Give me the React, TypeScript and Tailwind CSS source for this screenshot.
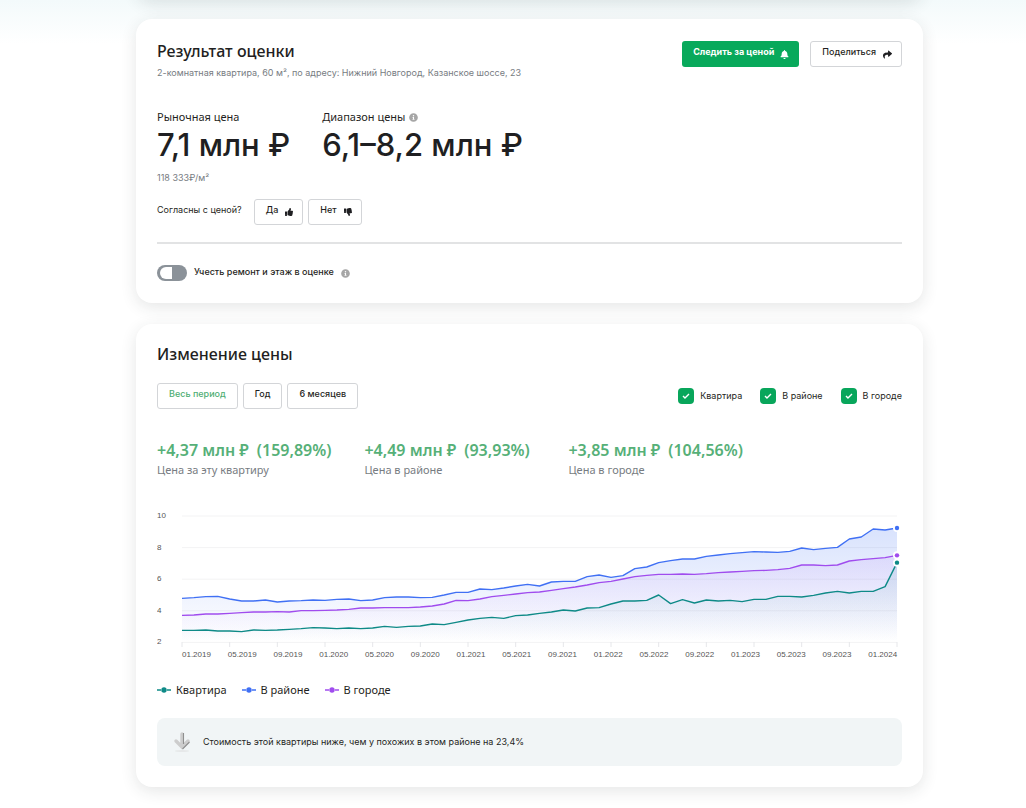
import type { ReactNode } from 'react';
import { FaBell, FaInfoCircle, FaShare, FaThumbsDown, FaThumbsUp } from 'react-icons/fa';

const series = [
  {
    id: 'district',
    color: '#4070f4',
    opacity: 0.2,
    points: [
      295, 293, 290, 289, 297, 303, 303, 300, 306, 303, 302, 300, 301, 298, 297, 302, 300, 293, 291, 291, 293, 292, 285,
      277, 277, 267, 269, 264, 258, 253, 258, 246, 244, 244, 230, 225, 232, 227, 206, 201, 188, 182, 177, 177, 169, 165,
      161, 158, 155, 156, 157, 154, 144, 149, 145, 142, 117, 111, 87, 90, 84,
    ],
  },
  {
    id: 'city',
    color: '#a04cee',
    opacity: 0.1,
    points: [
      346, 345, 342, 342, 340, 338, 336, 336, 335, 336, 332, 332, 331, 330, 328, 324, 324, 323, 323, 323, 321, 318, 312,
      301, 302, 297, 290, 286, 282, 278, 276, 271, 266, 261, 255, 248, 244, 237, 230, 226, 223, 223, 222, 223, 221, 218,
      216, 214, 212, 211, 209, 205, 195, 195, 197, 195, 183, 179, 176, 173, 166,
    ],
  },
  {
    id: 'flat',
    color: '#0e8a87',
    opacity: 0.1,
    points: [
      391, 391, 390, 393, 393, 395, 390, 391, 390, 388, 386, 383, 384, 386, 384, 386, 384, 379, 382, 379, 378, 372, 374,
      367, 360, 355, 352, 355, 347, 345, 340, 336, 330, 333, 324, 323, 312, 303, 303, 301, 285, 311, 299, 309, 300, 303,
      301, 305, 298, 298, 289, 289, 291, 286, 279, 274, 279, 274, 274, 260, 188,
    ],
  },
];

const months = [
  '01.2019', '05.2019', '09.2019', '01.2020', '05.2020', '09.2020', '01.2021', '05.2021',
  '09.2021', '01.2022', '05.2022', '09.2022', '01.2023', '05.2023', '09.2023', '01.2024',
];

const levels = [10, 8, 6, 4, 2];

const stats = [
  { value: '+4,37 млн ₽', percent: '(159,89%)', label: 'Цена за эту квартиру' },
  { value: '+4,49 млн ₽', percent: '(93,93%)', label: 'Цена в районе' },
  { value: '+3,85 млн ₽', percent: '(104,56%)', label: 'Цена в городе' },
];

const legend = [
  { name: 'Квартира', color: '#0e8a87' },
  { name: 'В районе', color: '#4070f4' },
  { name: 'В городе', color: '#a04cee' },
];

const LEFT = 25;
const WIDTH = 715;
const BOTTOM = 133;

const px = (i: number) => LEFT + (i * WIDTH) / 60;
const py = (level: number) => level / 3 - 9;

const PriceChart = () => (
  <svg viewBox="0 0 745 152" className="block h-auto w-full" role="img" aria-label="График изменения цены">
    <defs>
      {series.map((s) => (
        <linearGradient key={s.id} id={`fill-${s.id}`} x1="0" y1="0" x2="0" y2="1">
          <stop offset="0" stopColor={s.color} stopOpacity={s.opacity} />
          <stop offset="1" stopColor={s.color} stopOpacity="0" />
        </linearGradient>
      ))}
    </defs>
    {levels.map((level, i) => (
      <g key={level}>
        <line x1={LEFT} x2={LEFT + WIDTH} y1={7 + i * 31.6} y2={7 + i * 31.6} stroke="#f3f3f4" />
        <text x="0" y={9 + i * 31.6} fontSize="8" fill="#555">
          {level}
        </text>
      </g>
    ))}
    {months.map((month, i) => (
      <g key={month}>
        <line x1={px(i * 4)} x2={px(i * 4)} y1={BOTTOM} y2={BOTTOM + 5} stroke="#e6e7ea" />
        <text x={LEFT + i * 45.75} y="148" fontSize="8" fill="#555">
          {month}
        </text>
      </g>
    ))}
    {series.map((s) => {
      const path = s.points.map((p, i) => `${i ? 'L' : 'M'}${px(i)} ${py(p)}`).join('');
      return (
        <g key={s.id}>
          <path d={`${path}V${BOTTOM}H${LEFT}Z`} fill={`url(#fill-${s.id})`} />
          <path d={path} fill="none" stroke={s.color} strokeWidth="1.4" strokeLinejoin="round" />
        </g>
      );
    })}
    {series.map((s) => (
      <g key={s.id}>
        <circle cx={px(60)} cy={py(s.points[60])} r="4" fill="#fff" />
        <circle cx={px(60)} cy={py(s.points[60])} r="2.2" fill={s.color} />
      </g>
    ))}
  </svg>
);

const Card = ({ children }: { children: ReactNode }) => (
  <section className="rounded-2xl bg-white px-[21px] shadow-[0_4px_16px_rgba(40,50,50,0.12)]">{children}</section>
);

const OutlineButton = ({ children, icon, active }: { children: ReactNode; icon?: ReactNode; active?: boolean }) => (
  <button
    type="button"
    className={`flex h-[26px] items-center gap-[7px] rounded-[3px] border border-[#d3d5d8] bg-white pb-1 pl-[11px] font-['Inter','Noto_Sans',sans-serif] text-[9px] font-medium ${
      icon ? 'pr-[9px]' : 'pr-[11px]'
    } ${active ? 'text-[#4fae73]' : 'text-[#1f1f22]'}`}
  >
    {children}
    {icon}
  </button>
);

const Check = ({ label }: { label: string }) => (
  <label className="flex items-center gap-[6px] font-['Inter','Noto_Sans',sans-serif] text-[9px]">
    <span className="grid size-4 place-items-center">
      <input type="checkbox" defaultChecked className="col-start-1 row-start-1 size-4 appearance-none rounded-[4px] bg-[#08a65b]" />
      <svg viewBox="0 0 16 16" className="pointer-events-none col-start-1 row-start-1 size-4">
        <path d="M5 8l2 2 4-4" fill="none" stroke="#fff" strokeWidth="1.4" />
      </svg>
    </span>
    {label}
  </label>
);

const App = () => {
  return (
    <div className="bg-gradient-to-b from-[#f3fafb] via-white via-[44px] to-white pb-[21px] pl-[33px] font-['Noto_Sans','Liberation_Sans',sans-serif] text-[#1f1f22]">
      <main className="mx-auto flex max-w-[787px] flex-col gap-[21px]">
        <div className="-mt-4 -mb-[2px] h-4 rounded-b-2xl shadow-[0_4px_16px_rgba(40,50,50,0.12)]" />

        <Card>
          <div className="flex items-start justify-between pt-[22px]">
            <div>
              <h2 className="text-base leading-5 font-medium">Результат оценки</h2>
              <p className="mt-[6px] font-['Inter','Noto_Sans',sans-serif] text-[9px] leading-3 text-[#777c82]">
                2-комнатная квартира, 60 м², по адресу: Нижний Новгород, Казанское шоссе, 23
              </p>
            </div>
            <div className="flex gap-[11px]">
              <button
                type="button"
                className="flex h-[26px] items-center gap-[6px] rounded-[3px] bg-[#08a95b] pr-[10px] pb-1 pl-[11px] font-['Inter','Noto_Sans',sans-serif] text-[9px] font-bold text-white"
              >
                Следить за ценой
                <FaBell className="mt-1 size-[9px]" />
              </button>
              <OutlineButton icon={<FaShare className="mt-1 size-[9px]" />}>Поделиться</OutlineButton>
            </div>
          </div>

          <div className="mt-[30px] flex gap-8">
            <div>
              <p className="text-[11px] leading-4">Рыночная цена</p>
              <p className="font-['Inter','Noto_Sans',sans-serif] text-[31px] leading-10 font-medium">7,1 млн ₽</p>
              <p className="mt-[5px] font-['Inter','Noto_Sans',sans-serif] text-[9px] leading-4 text-[#777c82]">
                118 333₽/м²
              </p>
            </div>
            <div>
              <p className="flex items-center gap-1 text-[11px] leading-4">
                Диапазон цены
                <FaInfoCircle className="size-[9px] text-[#a6a6a6]" />
              </p>
              <p className="font-['Inter','Noto_Sans',sans-serif] text-[31px] leading-10 font-medium">6,1–8,2 млн ₽</p>
            </div>
          </div>

          <div className="mt-[13px] flex items-center gap-[5px]">
            <span className="mr-[7px] pb-1 font-['Inter','Noto_Sans',sans-serif] text-[9px]">Согласны с ценой?</span>
            <OutlineButton icon={<FaThumbsUp className="mt-1 size-2" />}>Да</OutlineButton>
            <OutlineButton icon={<FaThumbsDown className="mt-1 size-2" />}>Нет</OutlineButton>
          </div>

          <hr className="mt-[17px] border-t-2 border-[#e2e3e4]" />

          <div className="flex items-center gap-[7px] pt-[21px] pb-[22px]">
            <input
              id="repair"
              type="checkbox"
              role="switch"
              className="flex h-4 w-[30px] appearance-none items-center rounded-full bg-[#8b9299] px-[3px] before:block before:size-3 before:rounded-l-full before:rounded-r-[3px] before:bg-white"
            />
            <label htmlFor="repair" className="pb-[2px] font-['Inter','Noto_Sans',sans-serif] text-[9px] leading-3 font-medium">
              Учесть ремонт и этаж в оценке
            </label>
            <FaInfoCircle className="size-[9px] text-[#a6a6a6]" />
          </div>
        </Card>

        <Card>
          <h2 className="pt-[19px] text-base leading-[22px] font-medium">Изменение цены</h2>

          <div className="mt-[18px] flex items-center justify-between">
            <div className="flex gap-[5px]">
              <OutlineButton active>Весь период</OutlineButton>
              <OutlineButton>Год</OutlineButton>
              <OutlineButton>6 месяцев</OutlineButton>
            </div>
            <div className="flex gap-[18px]">
              <Check label="Квартира" />
              <Check label="В районе" />
              <Check label="В городе" />
            </div>
          </div>

          <div className="mt-[30px] flex gap-[33px]">
            {stats.map((stat) => (
              <div key={stat.label} className="min-w-[171px]">
                <p className="flex gap-2 text-base leading-[22px] font-semibold text-[#56b078]">
                  <span>{stat.value}</span>
                  <span>{stat.percent}</span>
                </p>
                <p className="mt-px text-[11px] leading-4 text-[#777c82]">{stat.label}</p>
              </div>
            ))}
          </div>

          <div className="mt-[31px] font-['Liberation_Sans',Arial,sans-serif]">
            <PriceChart />
          </div>

          <ul className="mt-[21px] flex gap-[15px]">
            {legend.map((item) => (
              <li key={item.name} className="flex items-center gap-[5px] text-[11px] leading-4">
                <svg viewBox="0 0 14 6" className="h-[6px] w-[14px]">
                  <path d="M0 3h4M10 3h4" stroke={item.color} strokeWidth="1.6" />
                  <circle cx="7" cy="3" r="2.7" fill={item.color} />
                </svg>
                {item.name}
              </li>
            ))}
          </ul>

          <div className="mt-5 mb-[21px] flex h-12 items-center gap-3 rounded-lg bg-[#f1f5f6] px-4">
            <svg viewBox="0 0 18 20" className="h-5 w-[18px]">
              <ellipse cx="9" cy="19" rx="7" ry="1" fill="#e6e8e9" />
              <path d="M9 2v12M3 9l6 6 6-6" fill="none" stroke="#cdcdcd" strokeWidth="3.4" strokeLinecap="round" />
              <path d="M10.5 1v11M9.5 17l7-7" fill="none" stroke="#8f8f8f" strokeWidth="1.1" />
            </svg>
            <p className="font-['Inter','Noto_Sans',sans-serif] text-[9px]">
              Стоимость этой квартиры ниже, чем у похожих в этом районе на 23,4%
            </p>
          </div>
        </Card>
      </main>
    </div>
  );
};

export default App;
